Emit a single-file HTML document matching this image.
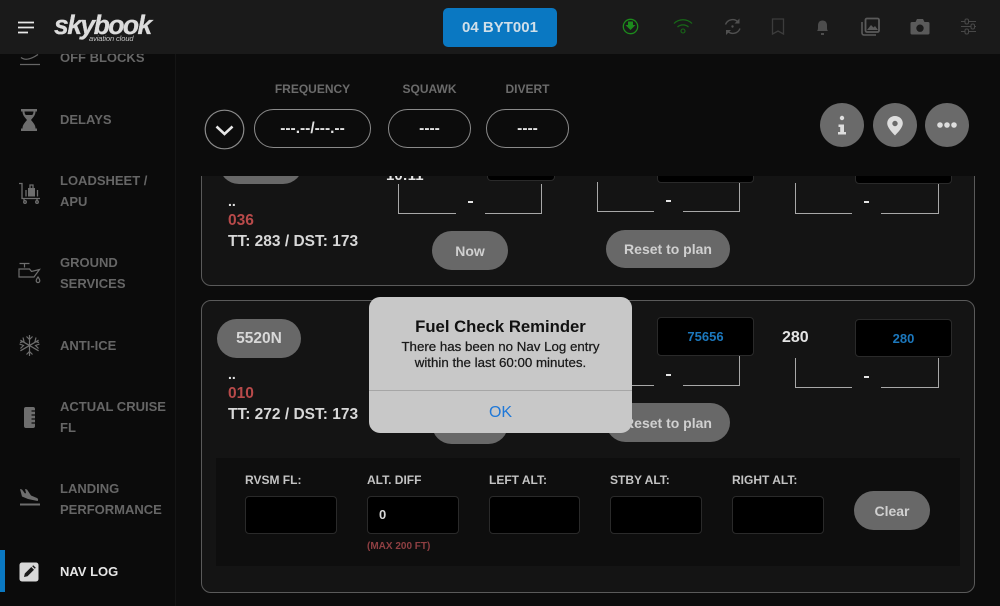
<!DOCTYPE html>
<html><head><meta charset="utf-8">
<style>
*{box-sizing:border-box}
html,body{margin:0;padding:0;width:1000px;height:606px;overflow:hidden;background:#0c0c0c}
body{position:relative;font-family:"Liberation Sans",sans-serif;font-weight:700}
.a{position:absolute}
.t{position:absolute;white-space:nowrap}
.c{position:absolute;white-space:nowrap;text-align:center}
.card{position:absolute;left:201px;width:774px;background:#141414;border:1.5px solid #5a5a5a;border-radius:10px}
.side{position:absolute;left:60px;color:#666;font-size:13px;line-height:21px;white-space:nowrap}
.btn{position:absolute;background:#686868;color:#d0d0d0;border-radius:20px;font-size:14px;display:flex;align-items:center;justify-content:center}
.inp{position:absolute;background:#000;border:1px solid #2a2a2a;border-radius:4px}
.pill{position:absolute;border:1px solid #8a8a8a;border-radius:20px;color:#e2e2e2;font-size:15.500px;display:flex;align-items:center;justify-content:center;height:39px;top:109px}
.lab{position:absolute;color:#6b6b6b;font-size:12px;text-align:center;top:82px}
.fl{position:absolute;top:473px;color:#c4c4c4;font-size:12px;white-space:nowrap}
.br{position:absolute;border-left:1.5px solid #a8a8a8;border-right:1.5px solid #a8a8a8;border-bottom:1.5px solid #a8a8a8}
.gap{position:absolute;background:#141414;width:29px;height:4px}
.dash{position:absolute;width:5px;height:2px;background:#e4e4e4}
.round{position:absolute;top:103px;width:44px;height:44px;border-radius:50%;background:#6a6a6a}
.tt{position:absolute;left:228px;font-size:15.500px;color:#d8d8d8;line-height:18px;white-space:nowrap}
.red{position:absolute;left:228px;font-size:15.500px;color:#b84a4a;line-height:18px}
</style></head><body>

<!-- sidebar -->
<div class="a" style="left:0;top:0;width:175px;height:606px;background:#0b0b0b"></div>
<div class="a" style="left:175px;top:54px;width:1px;height:552px;background:#151515"></div>
<div class="a" style="left:176px;top:54px;width:824px;height:552px;background:#0c0c0c"></div>

<!-- cards -->
<div class="card" style="top:120px;height:166px"></div>
<div class="card" style="top:300px;height:293px"></div>

<!-- card 1 content -->
<div class="t" style="left:228px;top:193px;font-size:14px;color:#e0e0e0;line-height:16px">..</div>
<div class="red" style="top:212px">036</div>
<div class="tt" style="top:233px">TT: 283 / DST: 173</div>
<div class="br" style="left:398px;top:184px;width:144px;height:30px"></div><div class="gap" style="left:456px;top:211px"></div><div class="dash" style="left:468px;top:201px"></div>
<div class="br" style="left:597px;top:182px;width:143px;height:30px"></div><div class="gap" style="left:654px;top:209px"></div><div class="dash" style="left:666px;top:200px"></div>
<div class="br" style="left:795px;top:183px;width:144px;height:31px"></div><div class="gap" style="left:852px;top:211px"></div><div class="dash" style="left:864px;top:201px"></div>
<div class="btn" style="left:432px;top:231px;width:76px;height:39px">Now</div>
<div class="btn" style="left:606px;top:230px;width:124px;height:38px">Reset to plan</div>
<div class="inp" style="left:657px;top:150px;width:97px;height:33px"></div>
<div class="inp" style="left:855px;top:150px;width:97px;height:34px"></div>
<div class="btn" style="left:219px;top:140px;width:84px;height:44px"></div>
<div class="t" style="left:386px;top:167px;font-size:15px;color:#e4e4e4;line-height:18px">10:11</div>
<div class="inp" style="left:487px;top:150px;width:68px;height:31px"></div>

<!-- card 2 content -->
<div class="btn" style="left:217px;top:319px;width:84px;height:39px;font-size:15.500px;color:#d8d8d8">5520N</div>
<div class="t" style="left:228px;top:366px;font-size:14px;color:#e0e0e0;line-height:16px">..</div>
<div class="red" style="top:385px">010</div>
<div class="tt" style="top:406px">TT: 272 / DST: 173</div>
<div class="inp" style="left:657px;top:317px;width:97px;height:39px;color:#1c78bd;font-size:13px;line-height:38px;text-align:center">75656</div>
<div class="t" style="left:782px;top:329px;font-size:16px;color:#e4e4e4;line-height:18px">280</div>
<div class="inp" style="left:855px;top:319px;width:97px;height:38px;color:#1c78bd;font-size:13px;line-height:37px;text-align:center">280</div>
<div class="br" style="left:597px;top:356px;width:143px;height:30px"></div><div class="gap" style="left:654px;top:383px"></div><div class="dash" style="left:666px;top:374px"></div>
<div class="br" style="left:795px;top:358px;width:144px;height:30px"></div><div class="gap" style="left:852px;top:385px"></div><div class="dash" style="left:864px;top:376px"></div>
<div class="btn" style="left:432px;top:405px;width:76px;height:39px"></div>
<div class="btn" style="left:606px;top:403px;width:124px;height:39px">Reset to plan</div>

<!-- lower panel -->
<div class="a" style="left:216px;top:458px;width:744px;height:108px;background:#0e0e0e"></div>
<div class="fl" style="left:245px">RVSM FL:</div>
<div class="fl" style="left:367px">ALT. DIFF</div>
<div class="fl" style="left:489px">LEFT ALT:</div>
<div class="fl" style="left:610px">STBY ALT:</div>
<div class="fl" style="left:732px">RIGHT ALT:</div>
<div class="inp" style="left:245px;top:496px;width:92px;height:38px"></div>
<div class="inp" style="left:367px;top:496px;width:92px;height:38px;color:#d8d8d8;font-size:13px;line-height:36px;padding-left:11px">0</div>
<div class="inp" style="left:489px;top:496px;width:91px;height:38px"></div>
<div class="inp" style="left:610px;top:496px;width:92px;height:38px"></div>
<div class="inp" style="left:732px;top:496px;width:92px;height:38px"></div>
<div class="t" style="left:367px;top:541px;font-size:10px;line-height:12px;color:#8f3f42">(MAX 200 FT)</div>
<div class="btn" style="left:854px;top:491px;width:76px;height:39px">Clear</div>

<!-- top panel -->
<div class="a" style="left:176px;top:54px;width:824px;height:122px;background:#0c0c0c"></div>
<div class="lab" style="left:254px;width:117px;line-height:14px">FREQUENCY</div>
<div class="lab" style="left:388px;width:83px;line-height:14px">SQUAWK</div>
<div class="lab" style="left:486px;width:83px;line-height:14px">DIVERT</div>
<div class="pill" style="left:254px;width:117px">---.--/---.--</div>
<div class="pill" style="left:388px;width:83px">----</div>
<div class="pill" style="left:486px;width:83px">----</div>
<svg class="a" style="left:204px;top:109px" width="41" height="41" viewBox="0 0 41 41"><circle cx="20.500" cy="20.500" r="19.300" fill="none" stroke="#8a8a8a" stroke-width="1.200"/><path d="M12.500 17.500L20.500 25L28.500 17.500" fill="none" stroke="#e6e6e6" stroke-width="2.600"/></svg>
<div class="round" style="left:820px"></div><div class="round" style="left:873px"></div><div class="round" style="left:925px"></div>
<svg class="a" style="left:820px;top:103px" width="150" height="44" viewBox="0 0 150 44">
<g fill="#dedede"><circle cx="22" cy="15" r="2.200"/><path d="M18.500 21.500h5.500v7.500h2v2.500h-8v-2.500h2.200v-5h-1.700z"/>
<path fill-rule="evenodd" d="M75 13c-4.500 0-7.800 3.300-7.800 7.300 0 4 4.500 8.700 7.800 12.200 3.300-3.500 7.800-8.200 7.800-12.200 0-4-3.300-7.300-7.800-7.300zm0 4.800a2.700 2.700 0 1 1 0 5.400 2.700 2.700 0 0 1 0-5.400z"/>
<circle cx="120" cy="22" r="2.800"/><circle cx="127" cy="22" r="2.800"/><circle cx="134" cy="22" r="2.800"/></g></svg>

<!-- sidebar text -->
<div class="a" style="left:0;top:54px;width:175px;height:552px;overflow:hidden">
<div class="side" style="top:-7px">OFF BLOCKS</div>
<svg class="a" style="left:18px;top:-4px" width="24" height="16" viewBox="0 0 24 16"><path d="M2 14.500h20M3 7.500c4 3 9 2.500 17-3" fill="none" stroke="#666" stroke-width="1.300"/></svg>
</div>
<div class="side" style="top:109px">DELAYS</div>
<div class="side" style="top:170px">LOADSHEET /<br>APU</div>
<div class="side" style="top:252px">GROUND<br>SERVICES</div>
<div class="side" style="top:335px">ANTI-ICE</div>
<div class="side" style="top:396px">ACTUAL CRUISE<br>FL</div>
<div class="side" style="top:478px">LANDING<br>PERFORMANCE</div>
<div class="side" style="top:561px;color:#e6e6e6">NAV LOG</div>
<div class="a" style="left:0;top:550px;width:5px;height:42px;background:#0a78c2"></div>

<!-- sidebar icons -->
<svg class="a" style="left:18px;top:108px" width="24" height="24" viewBox="0 0 24 24" fill="#6e6e6e"><path d="M3 1h16v2.500h-1.500c0 3.500-2 5.500-4.500 8.500 2.500 3 4.500 5 4.500 8.500H19V23H3v-2.500h1.500c0-3.500 2-5.500 4.500-8.500C6.500 9 4.500 7 4.500 3.500H3z"/><path d="M6.500 3.500h9c0 1.500-.5 2.500-1.200 3.500H7.700c-.7-1-1.200-2-1.200-3.500z" fill="#0b0b0b"/></svg>
<svg class="a" style="left:18px;top:181px" width="24" height="24" viewBox="0 0 24 24" fill="none" stroke="#6e6e6e" stroke-width="1.300"><path d="M1 2.500h3v15h18M6 17.500v2M19 17.500v2"/><circle cx="7" cy="21" r="1.300"/><circle cx="19" cy="21" r="1.300"/><rect x="10" y="7" width="7" height="8.500" fill="#6e6e6e" stroke="none"/><path d="M12 7V4h3V7M8 9v6.500M19.500 9v6.500"/></svg>
<svg class="a" style="left:17px;top:261px" width="25" height="25" viewBox="0 0 25 25" fill="none" stroke="#6e6e6e" stroke-width="1.200"><path d="M2.500 2.500h10M7.500 2.500v4M2 8h10.500l2 2.500 8-2-5.500 7.500H2zM21 16c-1.300 1.800-1.800 2.800-1.800 3.800a1.800 1.800 0 0 0 3.600 0c0-1-.5-2-1.800-3.800z"/></svg>
<svg class="a" style="left:18px;top:334px" width="23" height="23" viewBox="0 0 23 23" fill="none" stroke="#6e6e6e" stroke-width="1.200"><path d="M11.500 1v21M2.400 6.200l18.200 10.600M2.400 16.800L20.600 6.200M8.500 2.500l3 3 3-3M8.500 20.500l3-3 3 3M1.500 10l4 1.500-3 3M21.500 10l-4 1.500 3 3M5 3.500l1 4-4 1M18 3.500l-1 4 4 1"/></svg>
<svg class="a" style="left:23px;top:406px" width="13" height="23" viewBox="0 0 13 23"><rect x="1" y="1" width="11" height="21" rx="2" fill="#6e6e6e"/><path d="M8.500 5h3.500M8.500 9h3.500M8.500 13h3.500M8.500 17h3.500" stroke="#0b0b0b" stroke-width="1.200"/></svg>
<svg class="a" style="left:19px;top:488px" width="22" height="19" viewBox="0 0 22 19" fill="#6e6e6e"><path d="M1 1l2 .5 3 4 1-.5-1-4 2 .5 4 6 6 2.500c1.300.7 1.500 2.500.5 3L9 11 3 8.500z"/><rect x="1" y="15.500" width="20" height="2"/></svg>
<svg class="a" style="left:19px;top:562px" width="20" height="20" viewBox="0 0 20 20"><rect x="0.500" y="0.500" width="19" height="19" rx="2.500" fill="#d8d8d8"/><path d="M5 15l.8-3.500 6.500-6.500 2.700 2.700-6.500 6.500zM13.200 4.200l1-1 2.600 2.600-1 1z" fill="#1a1a1a"/></svg>

<!-- header -->
<div class="a" style="left:0;top:0;width:1000px;height:54px;background:#1a1a1a"></div>
<svg class="a" style="left:18px;top:21px" width="16" height="13" viewBox="0 0 16 13"><path d="M0 1.500h16M0 6.500h16M0 11.500h10" stroke="#e8e8e8" stroke-width="1.700"/></svg>
<div class="t" style="left:54px;top:9px;font-size:26.500px;line-height:32px;font-style:italic;color:#dcdcdc;letter-spacing:-1.550px;-webkit-text-stroke:.3px #dcdcdc">skybook</div>
<div class="t" style="left:89px;top:34px;font-size:7.500px;line-height:10px;font-style:italic;color:#c4c4c4;font-weight:400;letter-spacing:-.1px">aviation cloud</div>
<div class="a" style="left:443px;top:8px;width:114px;height:39px;background:#0a78c2;border-radius:5px;color:#d0dfe9;font-size:15px;text-align:center;line-height:39px">04 BYT001</div>

<svg class="a" style="left:620px;top:15px" width="360" height="24" viewBox="0 0 360 24" fill="none">
<!-- download -->
<circle cx="10.500" cy="11.500" r="7.200" stroke="#1c8a1c" stroke-width="1.300"/><path d="M8 6.500h5v3.500h2.500l-5 5-5-5H8z" fill="#1c8a1c"/>
<!-- wifi -->
<path d="M54 8.500c5-5 13-5 18 0M57.500 12c3-2.800 8-2.800 11 0" stroke="#176a17" stroke-width="1.200"/><circle cx="63" cy="16" r="2" stroke="#176a17" stroke-width="1.100"/>
<!-- sync -->
<path d="M105.500 9.500a7.500 7.500 0 0 1 12.500-2.500M120 13.500a7.500 7.500 0 0 1-12.500 2.500" stroke="#505050" stroke-width="1.400"/><path d="M119.500 3.500v5h-5zM106 20v-5h5z" fill="#505050"/><circle cx="112.500" cy="11.500" r="1.200" fill="#505050"/>
<!-- bookmark -->
<path d="M152.500 4h11v15l-5.500-3-5.500 3z" stroke="#3c3c3c" stroke-width="1.300"/>
<!-- bell -->
<path d="M197 16c1-1 1-2 1-5.500 0-3 1.500-5 4.500-5s4.500 2 4.500 5c0 3.500 0 4.500 1 5.500zM201 18h3v2h-3z" fill="#4d4d4d"/>
<!-- images -->
<path d="M242 7v11a2 2 0 0 0 2 2h12" stroke="#5a5a5a" stroke-width="1.600"/><rect x="245.500" y="3.500" width="13.500" height="13.500" rx="1.500" stroke="#5a5a5a" stroke-width="1.800"/><path d="M247 15l4-5 2.500 2.500 1.500-1.500 3 4z" fill="#5a5a5a"/>
<!-- camera -->
<path d="M292 7h3.500l1.500-3h6l1.500 3h3.500a1.500 1.500 0 0 1 1.500 1.500v9.500a1.500 1.500 0 0 1-1.500 1.500h-16a1.500 1.500 0 0 1-1.500-1.500v-9.500A1.500 1.500 0 0 1 292 7zm8 2.500a3.700 3.700 0 1 0 0 7.400 3.700 3.700 0 0 0 0-7.400z" fill="#5a5a5a" fill-rule="evenodd"/>
<!-- sliders -->
<path d="M341 6.500h15M341 11.500h15M341 16.500h15" stroke="#484848" stroke-width="1.100"/><rect x="345" y="4" width="3.500" height="5" rx="1.500" fill="#1a1a1a" stroke="#484848"/><rect x="351" y="9" width="3.500" height="5" rx="1.500" fill="#1a1a1a" stroke="#484848"/><rect x="345" y="14" width="3.500" height="5" rx="1.500" fill="#1a1a1a" stroke="#484848"/>
</svg>

<!-- dialog -->
<div class="a" style="left:369px;top:297px;width:263px;height:136px;background:#c8c8c8;border-radius:11px"></div>
<div class="a" style="left:369px;top:390px;width:263px;height:1px;background:#a6a6a6"></div>
<div class="c" style="left:369px;width:263px;top:317px;font-size:16.700px;line-height:20px;color:#111;font-weight:700">Fuel Check Reminder</div>
<div class="c" style="left:369px;width:263px;top:339px;font-size:13.300px;line-height:15.500px;color:#1a1a1a;font-weight:400;-webkit-text-stroke:.25px #1a1a1a">There has been no Nav Log entry<br>within the last 60:00 minutes.</div>
<div class="c" style="left:369px;width:263px;top:403px;font-size:16px;line-height:20px;color:#1f78d8;font-weight:400">OK</div>

</body></html>
